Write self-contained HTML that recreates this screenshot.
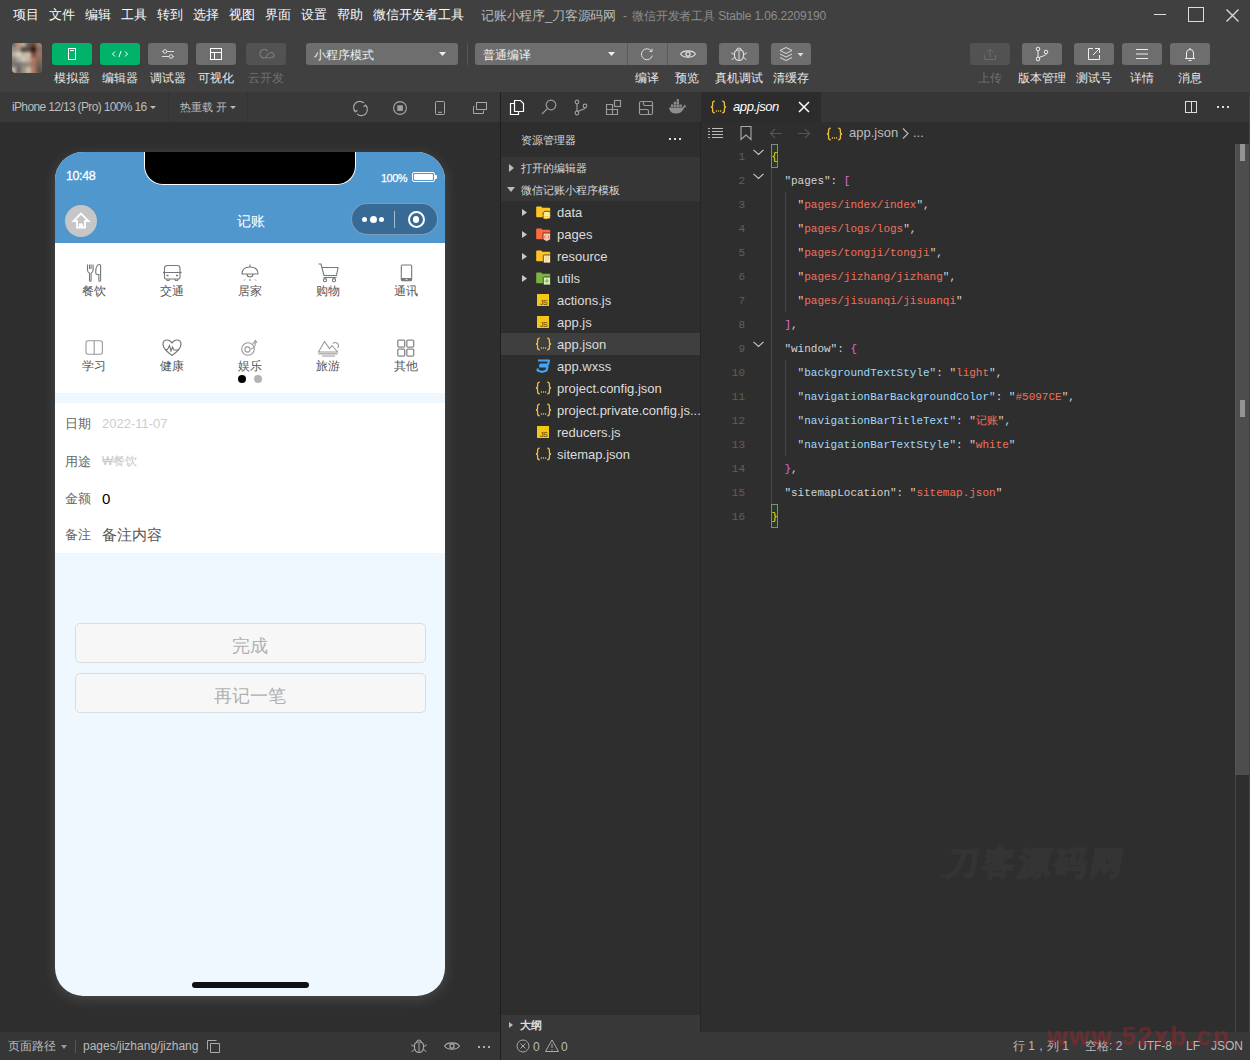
<!DOCTYPE html>
<html><head><meta charset="utf-8">
<style>
*{box-sizing:border-box;margin:0;padding:0}
html,body{width:1250px;height:1060px;overflow:hidden;background:#2e2e2e;font-family:"Liberation Sans",sans-serif;color:#ddd}
.a{position:absolute}
.t{position:absolute;white-space:nowrap;line-height:1}
svg{position:absolute;overflow:visible}
/* regions */
#top{left:0;top:0;width:1250px;height:92px;background:#404040}
#simbar{left:0;top:92px;width:500px;height:30px;background:#393939}
#sim{left:0;top:122px;width:500px;height:910px;background:#2e2e2e}
#simbot{left:0;top:1032px;width:500px;height:28px;background:#363636}
#vdiv{left:500px;top:92px;width:1px;height:968px;background:#1f1f1f}
#act{left:501px;top:92px;width:199px;height:30px;background:#353535}
#tree{left:501px;top:122px;width:199px;height:910px;background:#2e2e2e}
#tabbar{left:700px;top:92px;width:550px;height:30px;background:#363636}
#tab{left:701px;top:92px;width:120px;height:30px;background:#2c2c2c}
#ed{left:700px;top:122px;width:550px;height:910px;background:#2e2e2e}
#status{left:501px;top:1032px;width:749px;height:28px;background:#383838}
.menu{font-size:13px;color:#fafafa;top:8px;font-weight:500}
.btn{position:absolute;top:43px;height:22px;width:40px;border-radius:3px;background:#6e6e6e}
.btn.g{background:#00b26a}
.btn.d{background:#4a4a4a}
.lbl{font-size:12px;color:#e8e8e8;top:72px;font-weight:500}
.lbl.d{color:#707070}
.gl{font-size:12px;color:#555;top:285px}
.gl2{font-size:12px;color:#555;top:360px}
.fl{left:65px;font-size:13px;color:#666}
.tr{left:557px;font-size:13px;color:#dcdcdc}
.ln{left:725px;width:20px;text-align:right;font-family:'Liberation Mono',monospace;font-size:11px;line-height:24px;color:#5f5f5f}
.cd{font-family:'Liberation Mono',monospace;font-size:11px;line-height:24px;color:#d4d4d4}
</style></head><body>
<div id="top" class="a"></div>
<div id="simbar" class="a"></div>
<div id="sim" class="a"></div>
<div id="simbot" class="a"></div>
<div id="act" class="a"></div>
<div id="tree" class="a"></div>
<div id="tabbar" class="a"></div>
<div id="tab" class="a"></div>
<div id="ed" class="a"></div>
<div id="status" class="a"></div>
<div id="vdiv" class="a"></div>
<div class="a" style="left:700px;top:122px;width:1px;height:910px;background:#262626"></div>

<!-- menu -->
<div class="t menu" style="left:13px">项目</div>
<div class="t menu" style="left:49px">文件</div>
<div class="t menu" style="left:85px">编辑</div>
<div class="t menu" style="left:121px">工具</div>
<div class="t menu" style="left:157px">转到</div>
<div class="t menu" style="left:193px">选择</div>
<div class="t menu" style="left:229px">视图</div>
<div class="t menu" style="left:265px">界面</div>
<div class="t menu" style="left:301px">设置</div>
<div class="t menu" style="left:337px">帮助</div>
<div class="t menu" style="left:373px">微信开发者工具</div>
<div class="t menu" style="left:481px;top:9px;font-size:13px;letter-spacing:-0.2px;font-weight:400;color:#b8b8b8">记账小程序_刀客源码网</div><div class="t" style="left:623px;top:10px;font-size:12px;color:#8c8c8c">-</div><div class="t" style="left:632px;top:10px;font-size:12px;letter-spacing:-0.15px;color:#8c8c8c">微信开发者工具 Stable 1.06.2209190</div>

<!-- window controls -->
<div class="a" style="left:1154px;top:14px;width:12px;height:1px;background:#ddd"></div>
<div class="a" style="left:1188px;top:7px;width:16px;height:15px;border:1.5px solid #ddd"></div>
<svg style="left:1226px;top:9px" width="13" height="13"><path d="M0.5 0.5L12.5 12.5M12.5 0.5L0.5 12.5" stroke="#ddd" stroke-width="1.3"/></svg>


<!-- toolbar -->
<div class="a" style="left:12px;top:43px;width:30px;height:30px;border-radius:4px;overflow:hidden;background:#8a8078"><div class="a" style="left:0;top:0;width:30px;height:30px;filter:blur(1.6px)"><div class="a" style="left:-1px;top:-1px;width:7px;height:7px;background:#7a6a60"></div><div class="a" style="left:4px;top:-1px;width:7px;height:7px;background:#c0906e"></div><div class="a" style="left:9px;top:-1px;width:7px;height:7px;background:#b8b0a8"></div><div class="a" style="left:14px;top:-1px;width:7px;height:7px;background:#6a5a50"></div><div class="a" style="left:19px;top:-1px;width:7px;height:7px;background:#6a4030"></div><div class="a" style="left:24px;top:-1px;width:7px;height:7px;background:#a08070"></div><div class="a" style="left:-1px;top:4px;width:7px;height:7px;background:#9a9088"></div><div class="a" style="left:4px;top:4px;width:7px;height:7px;background:#a09a90"></div><div class="a" style="left:9px;top:4px;width:7px;height:7px;background:#504840"></div><div class="a" style="left:14px;top:4px;width:7px;height:7px;background:#5a4a40"></div><div class="a" style="left:19px;top:4px;width:7px;height:7px;background:#2a1810"></div><div class="a" style="left:24px;top:4px;width:7px;height:7px;background:#8a7060"></div><div class="a" style="left:-1px;top:9px;width:7px;height:7px;background:#b8b0a0"></div><div class="a" style="left:4px;top:9px;width:7px;height:7px;background:#d8d0c0"></div><div class="a" style="left:9px;top:9px;width:7px;height:7px;background:#c0b8a8"></div><div class="a" style="left:14px;top:9px;width:7px;height:7px;background:#d0c0b0"></div><div class="a" style="left:19px;top:9px;width:7px;height:7px;background:#7a4a40"></div><div class="a" style="left:24px;top:9px;width:7px;height:7px;background:#a07060"></div><div class="a" style="left:-1px;top:14px;width:7px;height:7px;background:#8a8078"></div><div class="a" style="left:4px;top:14px;width:7px;height:7px;background:#b0a8a0"></div><div class="a" style="left:9px;top:14px;width:7px;height:7px;background:#d0c8b8"></div><div class="a" style="left:14px;top:14px;width:7px;height:7px;background:#c8b0a0"></div><div class="a" style="left:19px;top:14px;width:7px;height:7px;background:#b07868"></div><div class="a" style="left:24px;top:14px;width:7px;height:7px;background:#8a6858"></div><div class="a" style="left:-1px;top:19px;width:7px;height:7px;background:#787070"></div><div class="a" style="left:4px;top:19px;width:7px;height:7px;background:#7a7272"></div><div class="a" style="left:9px;top:19px;width:7px;height:7px;background:#888080"></div><div class="a" style="left:14px;top:19px;width:7px;height:7px;background:#9a8880"></div><div class="a" style="left:19px;top:19px;width:7px;height:7px;background:#a87060"></div><div class="a" style="left:24px;top:19px;width:7px;height:7px;background:#706058"></div><div class="a" style="left:-1px;top:24px;width:7px;height:7px;background:#c0b8a0"></div><div class="a" style="left:4px;top:24px;width:7px;height:7px;background:#6a6060"></div><div class="a" style="left:9px;top:24px;width:7px;height:7px;background:#9a9080"></div><div class="a" style="left:14px;top:24px;width:7px;height:7px;background:#c8c0a8"></div><div class="a" style="left:19px;top:24px;width:7px;height:7px;background:#b07a68"></div><div class="a" style="left:24px;top:24px;width:7px;height:7px;background:#605048"></div></div></div>
<div class="btn g" style="left:52px"></div>
<svg style="left:52px;top:43px" width="40" height="22"><rect x="16.5" y="5.5" width="7" height="11" fill="none" stroke="#fff" stroke-width="1"/><path d="M18 7.5H22" stroke="#fff"/></svg>
<div class="btn g" style="left:100px"></div>
<svg style="left:100px;top:43px" width="40" height="22"><path d="M15 8.5L12.5 11L15 13.5M25 8.5L27.5 11L25 13.5M21 8L19 14" fill="none" stroke="#fff" stroke-width="1"/></svg>
<div class="btn" style="left:148px"></div>
<svg style="left:148px;top:43px" width="40" height="22"><path d="M14 8.5H26M14 13.5H26" stroke="#ddd" stroke-width="1"/><circle cx="17" cy="8.5" r="1.8" fill="#6e6e6e" stroke="#ddd"/><circle cx="23" cy="13.5" r="1.8" fill="#6e6e6e" stroke="#ddd"/></svg>
<div class="btn" style="left:196px"></div>
<svg style="left:196px;top:43px" width="40" height="22"><rect x="14.5" y="5.5" width="11" height="11" fill="none" stroke="#fff"/><path d="M14.5 9.5H25.5M18.5 9.5V16.5" stroke="#fff"/></svg>
<div class="btn d" style="left:246px;background:#525252"></div>
<svg style="left:246px;top:43px" width="40" height="22"><path d="M21.8 8.2A4.3 4.3 0 1 0 19.5 14.8" fill="none" stroke="#7c7c7c" stroke-width="1.1"/><path d="M19.5 14.8L25.8 14.8A2.6 2.6 0 1 0 24.5 9.8Q22 10 19.5 14.8Z" fill="none" stroke="#7c7c7c" stroke-width="1.1"/></svg>
<div class="t lbl" style="left:54px">模拟器</div>
<div class="t lbl" style="left:102px">编辑器</div>
<div class="t lbl" style="left:150px">调试器</div>
<div class="t lbl" style="left:198px">可视化</div>
<div class="t lbl d" style="left:248px">云开发</div>

<div class="a" style="left:306px;top:43px;width:152px;height:22px;border-radius:3px;background:#6e6e6e"></div>
<div class="t" style="left:314px;top:49px;font-size:12px;color:#eee">小程序模式</div>
<svg style="left:439px;top:52px" width="7" height="4"><path d="M0 0H7L3.5 4Z" fill="#eee"/></svg>
<div class="a" style="left:467px;top:43px;width:1px;height:22px;background:#555"></div>
<div class="a" style="left:475px;top:43px;width:232px;height:22px;border-radius:3px;background:#6e6e6e"></div>
<div class="a" style="left:627px;top:43px;width:1px;height:22px;background:#5a5a5a"></div>
<div class="a" style="left:667px;top:43px;width:1px;height:22px;background:#5a5a5a"></div>
<div class="t" style="left:483px;top:49px;font-size:12px;color:#eee">普通编译</div>
<svg style="left:608px;top:52px" width="7" height="4"><path d="M0 0H7L3.5 4Z" fill="#eee"/></svg>
<svg style="left:640px;top:47px" width="14" height="14"><path d="M11.5 4.2A5.5 5.5 0 1 0 12.3 8.5" fill="none" stroke="#ddd" stroke-width="1"/><path d="M9.5 4.5L12 4.5L12 1.8" fill="none" stroke="#ddd" stroke-width="1"/></svg>
<svg style="left:680px;top:49px" width="17" height="11"><path d="M0.6 5C3 0.8 13 0.8 15.4 5C13 9.2 3 9.2 0.6 5Z" fill="none" stroke="#e0e0e0" stroke-width="1.1"/><circle cx="8" cy="5" r="2.1" fill="none" stroke="#e0e0e0" stroke-width="1.2"/></svg>
<div class="btn" style="left:719px"></div>
<svg style="left:730px;top:46px" width="18" height="16"><path d="M4.5 9.5A4.5 5 0 0 0 13.5 9.5V7.5Q13.5 4 9 4Q4.5 4 4.5 7.5Z" fill="none" stroke="#e0e0e0" stroke-width="1.1"/><path d="M6.5 4.5A2.5 2.5 0 0 1 11.5 4.5" fill="none" stroke="#e0e0e0"/><path d="M9 5V14.3M4.5 8H2.5L1.5 6.5M13.5 8H15.5L16.5 6.5M4.7 11.5L2.8 12.5L1.8 14M13.3 11.5L15.2 12.5L16.2 14" fill="none" stroke="#e0e0e0" stroke-width="1"/></svg>
<div class="btn" style="left:771px"></div>
<svg style="left:779px;top:46px" width="28" height="16"><path d="M1 4.5L7 1.5L13 4.5L7 7.5Z" fill="none" stroke="#ddd"/><path d="M1 8L7 11L13 8M1 11.5L7 14.5L13 11.5" fill="none" stroke="#ddd"/><path d="M18.5 7H24.5L21.5 10.5Z" fill="#ddd"/></svg>
<div class="t lbl" style="left:635px">编译</div>
<div class="t lbl" style="left:675px">预览</div>
<div class="t lbl" style="left:715px">真机调试</div>
<div class="t lbl" style="left:773px">清缓存</div>

<div class="btn d" style="left:970px;background:#525252"></div>
<svg style="left:983px;top:47px" width="14" height="14"><path d="M7 10V2M4 5L7 2L10 5M1.5 8V12.5H12.5V8" fill="none" stroke="#6a6a6a"/></svg>
<div class="btn" style="left:1022px"></div>
<svg style="left:1034px;top:46px" width="16" height="16"><circle cx="4" cy="3" r="1.8" fill="none" stroke="#eee"/><circle cx="4" cy="13" r="1.8" fill="none" stroke="#eee"/><circle cx="12" cy="6" r="1.8" fill="none" stroke="#eee"/><path d="M4 4.8V11.2M12 7.8C12 10 7 10 5 11.8" fill="none" stroke="#eee"/></svg>
<div class="btn" style="left:1074px"></div>
<svg style="left:1087px;top:47px" width="14" height="14"><path d="M6 1.5H1.5V12.5H12.5V8M8 1.5H12.5V6M12.5 1.5L6 8" fill="none" stroke="#eee"/></svg>
<div class="btn" style="left:1122px"></div>
<svg style="left:1135px;top:48px" width="14" height="12"><path d="M1 1.5H13M1 6H13M1 10.5H13" stroke="#eee"/></svg>
<div class="btn" style="left:1170px"></div>
<svg style="left:1183px;top:46px" width="14" height="16"><path d="M2 12.5H12M3.5 12.5V7A3.5 3.5 0 0 1 10.5 7V12.5M7 2V3.5M5.5 14.5H8.5" fill="none" stroke="#eee"/></svg>
<div class="t lbl d" style="left:978px">上传</div>
<div class="t lbl" style="left:1018px">版本管理</div>
<div class="t lbl" style="left:1076px">测试号</div>
<div class="t lbl" style="left:1130px">详情</div>
<div class="t lbl" style="left:1178px">消息</div>


<!-- simulator toolbar -->
<div class="t" style="left:12px;top:101px;font-size:12px;letter-spacing:-0.65px;color:#bdbdbd">iPhone 12/13 (Pro) 100% 16</div>
<svg style="left:150px;top:106px" width="6" height="3"><path d="M0 0H6L3 3Z" fill="#bbb"/></svg>
<div class="a" style="left:168px;top:92px;width:1px;height:30px;background:#333"></div>
<div class="t" style="left:180px;top:102px;font-size:11px;color:#bdbdbd">热重载 开</div>
<svg style="left:230px;top:106px" width="6" height="3"><path d="M0 0H6L3 3Z" fill="#bbb"/></svg>
<div class="a" style="left:247px;top:92px;width:1px;height:30px;background:#333"></div>
<svg style="left:353px;top:101px" width="15" height="15"><path d="M2.3 10.5A6 6 0 0 1 11 2.2" fill="none" stroke="#a8a8a8" stroke-width="1.1"/><path d="M12.7 4.5A6 6 0 0 1 4 12.8" fill="none" stroke="#a8a8a8" stroke-width="1.1"/><path d="M0.8 8.5L2.3 11L4.5 9.3M14.2 6.5L12.7 4L10.5 5.7" fill="none" stroke="#a8a8a8" stroke-width="1.1"/></svg>
<svg style="left:393px;top:101px" width="14" height="14"><circle cx="7" cy="7" r="6.4" fill="none" stroke="#a8a8a8" stroke-width="1.1"/><rect x="4.3" y="4.3" width="5.6" height="5.6" fill="#a0a0a0"/></svg>
<svg style="left:435px;top:101px" width="10" height="14"><rect x="0.5" y="0.5" width="9" height="13" rx="1" fill="none" stroke="#a8a8a8"/><path d="M3 11.3H7" stroke="#a8a8a8"/></svg>
<svg style="left:473px;top:102px" width="15" height="13"><rect x="3.5" y="0.5" width="10" height="7" fill="none" stroke="#a8a8a8"/><path d="M1.5 4.5H0.5V11.5H10.5V8.5" fill="none" stroke="#a8a8a8"/></svg>

<!-- phone -->
<div class="a" style="left:55px;top:152px;width:390px;height:844px;border-radius:28px;box-shadow:0 3px 14px rgba(255,255,255,.14)"></div>
<div class="a" id="phone" style="left:55px;top:152px;width:390px;height:844px;border-radius:28px;overflow:hidden;background:#f0f8ff">
  <div class="a" style="left:0;top:0;width:390px;height:91px;background:#5097ce"></div>
  <div class="a" style="left:89px;top:-2px;width:212px;height:35px;background:#000;border:1px solid #fff;border-top:none;border-radius:0 0 19px 19px"></div>
  <div class="a" style="left:0;top:91px;width:390px;height:150px;background:#fff"></div>
  <div class="a" style="left:0;top:251px;width:390px;height:150px;background:#fff"></div>
</div>
<div class="t" style="left:66px;top:170px;font-size:12.5px;color:#fff;letter-spacing:-0.4px;-webkit-text-stroke:0.3px #fff">10:48</div>
<div class="t" style="left:381px;top:173px;font-size:11px;color:#fff;letter-spacing:-0.5px;-webkit-text-stroke:0.25px #fff">100%</div>
<div class="a" style="left:412px;top:172px;width:23px;height:10px;border:1px solid #fff;border-radius:2px"></div>
<div class="a" style="left:414px;top:174px;width:19px;height:6px;background:#fff;border-radius:1px"></div>
<div class="a" style="left:435px;top:175px;width:2px;height:4px;background:#fff;border-radius:0 1px 1px 0"></div>
<div class="a" style="left:65px;top:205px;width:32px;height:32px;border-radius:50%;background:#c6c6c6"></div>
<svg style="left:72px;top:212px" width="18" height="18"><path d="M9 1.5L1.5 9H5V15.5H8V12.5H10V15.5H13V9H16.5Z" fill="none" stroke="#fff" stroke-width="1.8" stroke-linejoin="miter"/></svg>
<div class="t" style="left:237px;top:214px;font-size:14px;color:#fff">记账</div>
<div class="a" style="left:351px;top:203px;width:87px;height:32px;border-radius:16px;background:#376b96;border:1px solid rgba(255,255,255,.35)"></div>
<div class="a" style="left:362px;top:217px;width:5px;height:5px;border-radius:50%;background:#fff"></div>
<div class="a" style="left:369.5px;top:215.5px;width:7.5px;height:7.5px;border-radius:50%;background:#fff"></div>
<div class="a" style="left:379px;top:217px;width:5px;height:5px;border-radius:50%;background:#fff"></div>
<div class="a" style="left:394px;top:211px;width:1px;height:17px;background:rgba(255,255,255,.55)"></div>
<div class="a" style="left:407.5px;top:211px;width:17px;height:17px;border-radius:50%;border:2px solid #fff"></div>
<div class="a" style="left:412.8px;top:216.3px;width:6.5px;height:6.5px;border-radius:50%;background:#fff"></div>
<div class="a" style="left:192px;top:982px;width:117px;height:6px;border-radius:3px;background:#111"></div>


<!-- grid -->
<svg style="left:0;top:0" width="500" height="400" fill="none" stroke="#777" stroke-width="1.1">
<path d="M87.5 264.5V270Q87.5 272.5 89.5 273.2V280.2Q89.5 281.3 90.3 281.3Q91.1 281.3 91.1 280.2V273.2Q93.1 272.5 93.1 270V264.5M89.5 264.5V269M91.1 264.5V269"/>
<path d="M95.7 272.5Q95.7 264.5 99.5 264.5Q100.6 264.5 100.6 265.7V280.2Q100.6 281.3 99.7 281.3Q98.8 281.3 98.8 280.2V274.5H97.2Q95.7 274.5 95.7 272.5Z"/>
<path d="M164.5 272.5V268Q164.5 265.5 167.5 265.5H177Q180 265.5 180 268V272.5M164.5 272.5H180V277.5Q180 279 178.5 279H166Q164.5 279 164.5 277.5Z"/>
<path d="M163 272.5H164.5M180 272.5H181.5M166.5 275.5H168.5M176 275.5H178" stroke-width="1.3"/>
<path d="M166.5 279Q166.5 280.8 168 280.8Q169.5 280.8 169.5 279M175 279Q175 280.8 176.5 280.8Q178 280.8 178 279"/>
<path d="M242 274Q242 267 250 267Q258 267 258 274Z"/><path d="M250 267V264.5"/><path d="M247 274Q247 277 250 277Q253 277 253 274"/>
<path d="M245 279.5L244 280.5M255 279.5L256 280.5M250 279V281" stroke-width="1"/>
<path d="M318.5 264H321L324 275.5H336.5L338 267.5H322"/><path d="M323.5 277.5H336.5"/>
<circle cx="325" cy="280.2" r="1.6"/><circle cx="334" cy="280.2" r="1.6"/>
<rect x="401.3" y="265" width="10.4" height="15.8" rx="1.2"/><rect x="401.3" y="278" width="10.4" height="2.8" fill="#777" stroke="none"/><path d="M405.5 279.4H407.5" stroke="#fff" stroke-width="0.8"/>
</svg>
<div class="t gl" style="left:82px">餐饮</div>
<div class="t gl" style="left:160px">交通</div>
<div class="t gl" style="left:238px">居家</div>
<div class="t gl" style="left:316px">购物</div>
<div class="t gl" style="left:394px">通讯</div>
<svg style="left:0;top:0" width="500" height="400" fill="none" stroke="#888" stroke-width="1.1">
<rect x="86" y="340.8" width="16.4" height="13.4" rx="2.2" stroke="#999"/><path d="M94.2 340.8V354.2" stroke="#999"/>
<path d="M172 355.5Q163 349 163 344.3Q163 340 167 340Q170 340 172 343Q174 340 177 340Q181 340 181 344.3Q181 349 172 355.5Z" stroke-width="1.2" stroke="#777"/>
<path d="M165 349.5H167.5L169.5 345.5L171 351L172.5 347L174 350H179" stroke="#777"/>
<circle cx="248" cy="349" r="6.3" stroke="#999"/><circle cx="247.5" cy="349.5" r="2.6" stroke="#999"/><path d="M251 349Q256.5 347 255 342M252.5 344.5L255.5 340.5L257 343" stroke="#999"/>
<path d="M318.5 352L324.5 341.5L329.5 348.5L332 345.5L337.5 352Z" stroke="#999"/><path d="M333 343.5A3 3 0 1 1 337.5 348" stroke="#999"/>
<path d="M318.5 353.8H337.5" stroke="#aaa" stroke-width="1.4"/><path d="M322 356H335" stroke="#bbb" stroke-width="1.6"/>
<rect x="397.8" y="340.2" width="6.9" height="6.9" rx="1" stroke="#888" stroke-width="1.3"/><rect x="406.8" y="340.2" width="6.9" height="6.9" rx="1" stroke="#888" stroke-width="1.3"/>
<rect x="397.8" y="349.2" width="6.9" height="6.9" rx="1" stroke="#888" stroke-width="1.3"/><rect x="406.8" y="349.2" width="6.9" height="6.9" rx="1" stroke="#888" stroke-width="1.3"/>
</svg>
<div class="t gl2" style="left:82px">学习</div>
<div class="t gl2" style="left:160px">健康</div>
<div class="t gl2" style="left:238px">娱乐</div>
<div class="t gl2" style="left:316px">旅游</div>
<div class="t gl2" style="left:394px">其他</div>
<div class="a" style="left:238px;top:375px;width:8px;height:8px;border-radius:50%;background:#000"></div>
<div class="a" style="left:254px;top:375px;width:8px;height:8px;border-radius:50%;background:#b3b3b3"></div>

<!-- form -->
<div class="t fl" style="top:417px">日期</div>
<div class="t" style="left:102px;top:417px;font-size:13px;color:#cdcdcd">2022-11-07</div>
<div class="t fl" style="top:455px">用途</div>
<div class="t" style="left:102px;top:455px;font-size:12px;color:#c9c9c9">₩餐饮</div>
<div class="t fl" style="top:492px">金额</div>
<div class="t" style="left:102px;top:491px;font-size:15px;color:#000">0</div>
<div class="t fl" style="top:528px">备注</div>
<div class="t" style="left:102px;top:527px;font-size:15px;color:#555">备注内容</div>

<div class="a" style="left:75px;top:623px;width:351px;height:40px;border-radius:5px;background:#f7f7f7;border:1px solid #dcdcdc"></div>
<div class="t" style="left:232px;top:637px;font-size:18px;color:#b0b0b0">完成</div>
<div class="a" style="left:75px;top:673px;width:351px;height:40px;border-radius:5px;background:#f7f7f7;border:1px solid #dcdcdc"></div>
<div class="t" style="left:214px;top:687px;font-size:18px;color:#b0b0b0">再记一笔</div>


<!-- activity bar -->
<svg style="left:509px;top:99px" width="16" height="17" fill="none" stroke="#fff" stroke-width="1.2"><path d="M5.5 4.5H1.5V15.5H9.5V12.5"/><path d="M5.5 1.5H11.5L14.5 4.5V12.5H5.5Z"/></svg>
<svg style="left:541px;top:99px" width="16" height="17" fill="none" stroke="#9a9a9a" stroke-width="1.2"><circle cx="10" cy="6" r="4.8"/><path d="M6.6 9.4L1 15"/></svg>
<svg style="left:573px;top:99px" width="16" height="17" fill="none" stroke="#9a9a9a" stroke-width="1.2"><circle cx="4" cy="3" r="1.8"/><circle cx="4" cy="14" r="1.8"/><circle cx="12" cy="7" r="1.8"/><path d="M4 4.8V12.2M12 8.8C12 11 6 10.5 5 12.5"/></svg>
<svg style="left:605px;top:99px" width="17" height="17" fill="none" stroke="#9a9a9a" stroke-width="1.2"><path d="M1.5 5.5H7.5V15.5H1.5ZM1.5 10.5H12.5V15.5H7.5"/><rect x="9.5" y="1.5" width="6" height="6"/></svg>
<svg style="left:638px;top:100px" width="16" height="16" fill="none" stroke="#9a9a9a" stroke-width="1.2"><rect x="1.5" y="1.5" width="13" height="13" rx="1.5"/><path d="M5.5 1.5V4Q5.5 5.5 7 5.5H14.5M1.5 9.5H9Q10.5 9.5 10.5 11V14.5"/></svg>
<svg style="left:668px;top:100px" width="19" height="15"><path d="M1 7.5H14.5Q16 6 16.5 4.5Q17.5 6 18.5 6.5Q17 7 16 8Q14 13.5 8 13.5Q1.5 13.5 1 7.5Z" fill="#8e8e8e"/><rect x="3" y="4.5" width="2.4" height="2.4" fill="#8e8e8e"/><rect x="5.8" y="4.5" width="2.4" height="2.4" fill="#8e8e8e"/><rect x="8.6" y="4.5" width="2.4" height="2.4" fill="#8e8e8e"/><rect x="11.4" y="4.5" width="2.4" height="2.4" fill="#8e8e8e"/><rect x="5.8" y="1.8" width="2.4" height="2.4" fill="#8e8e8e"/><rect x="8.6" y="1.8" width="2.4" height="2.4" fill="#8e8e8e"/><rect x="8.6" y="-0.8" width="2.4" height="2.4" fill="#8e8e8e"/></svg>
<!-- explorer -->
<div class="t" style="left:521px;top:135px;font-size:11px;font-weight:500;color:#d8d8d8">资源管理器</div>
<div class="a" style="left:669px;top:138px;width:2px;height:2px;background:#ddd"></div>
<div class="a" style="left:674px;top:138px;width:2px;height:2px;background:#ddd"></div>
<div class="a" style="left:679px;top:138px;width:2px;height:2px;background:#ddd"></div>
<div class="a" style="left:501px;top:157px;width:199px;height:44px;background:#363636"></div>
<svg style="left:509px;top:164px" width="5" height="8"><path d="M0 0L5 4L0 8Z" fill="#bbb"/></svg>
<div class="t" style="left:521px;top:163px;font-size:11px;font-weight:500;color:#d8d8d8">打开的编辑器</div>
<svg style="left:507px;top:187px" width="8" height="5"><path d="M0 0H8L4 5Z" fill="#bbb"/></svg>
<div class="t" style="left:521px;top:185px;font-size:11px;font-weight:500;color:#d8d8d8">微信记账小程序模板</div>
<svg style="left:522px;top:209px" width="5" height="7"><path d="M0 0L5 3.5L0 7Z" fill="#c8c8c8"/></svg><svg style="left:536px;top:206px" width="16" height="14"><path d="M0.2 1.2Q0.2 0.4 1 0.4H5.2L6.4 1.8H13.4Q14.2 1.8 14.2 2.6V10.4Q14.2 11.2 13.4 11.2H1Q0.2 11.2 0.2 10.4Z" fill="#ffc522"/><ellipse cx="10.8" cy="6.8" rx="3.6" ry="1.6" fill="#ffe7a0" stroke="#2e2e2e" stroke-width="0.8"/><path d="M7.2 6.8V11.5Q7.2 13.1 10.8 13.1Q14.4 13.1 14.4 11.5V6.8" fill="#ffe7a0" stroke="#2e2e2e" stroke-width="0.8"/><path d="M7.2 9.2Q7.2 10.6 10.8 10.6Q14.4 10.6 14.4 9.2M7.2 11.4Q7.2 12.8 10.8 12.8" fill="none" stroke="#ffc522" stroke-width="0.7"/></svg><div class="t tr" style="top:206px">data</div><svg style="left:522px;top:231px" width="5" height="7"><path d="M0 0L5 3.5L0 7Z" fill="#c8c8c8"/></svg><svg style="left:536px;top:228px" width="16" height="14"><path d="M0.2 1.2Q0.2 0.4 1 0.4H5.2L6.4 1.8H13.4Q14.2 1.8 14.2 2.6V10.4Q14.2 11.2 13.4 11.2H1Q0.2 11.2 0.2 10.4Z" fill="#ff6a3d"/><path d="M7 5H14.5V11.5L10.75 13.5L7 11.5Z" fill="#ffc9b8" stroke="#2e2e2e" stroke-width="0.8"/><path d="M9.5 7.5L8.5 9L9.5 10.5M12 7.5L13 9L12 10.5" fill="none" stroke="#f04a2a" stroke-width="0.8"/></svg><div class="t tr" style="top:228px">pages</div><svg style="left:522px;top:253px" width="5" height="7"><path d="M0 0L5 3.5L0 7Z" fill="#c8c8c8"/></svg><svg style="left:536px;top:250px" width="16" height="14"><path d="M0.2 1.2Q0.2 0.4 1 0.4H5.2L6.4 1.8H13.4Q14.2 1.8 14.2 2.6V10.4Q14.2 11.2 13.4 11.2H1Q0.2 11.2 0.2 10.4Z" fill="#ffc125"/><rect x="7.3" y="5" width="7.2" height="8" rx="0.8" fill="#fff0c0" stroke="#2e2e2e" stroke-width="0.8"/><path d="M8.8 7.3H13M8.8 9.2H13M8.8 11H11.5" stroke="#ffc125" stroke-width="0.8"/></svg><div class="t tr" style="top:250px">resource</div><svg style="left:522px;top:275px" width="5" height="7"><path d="M0 0L5 3.5L0 7Z" fill="#c8c8c8"/></svg><svg style="left:536px;top:272px" width="16" height="14"><path d="M0.2 1.2Q0.2 0.4 1 0.4H5.2L6.4 1.8H13.4Q14.2 1.8 14.2 2.6V10.4Q14.2 11.2 13.4 11.2H1Q0.2 11.2 0.2 10.4Z" fill="#7cb342"/><rect x="7.3" y="5" width="7.2" height="8" rx="0.8" fill="#d8f0c0" stroke="#2e2e2e" stroke-width="0.8"/><path d="M10.9 6.8V11.2M8.7 9H13.1" stroke="#7cb342" stroke-width="1.1"/></svg><div class="t tr" style="top:272px">utils</div><div class="a" style="left:537px;top:294px;width:12px;height:12px;background:#f5c518"></div><div class="t" style="left:540px;top:299px;font-size:7px;color:#4a3b00;letter-spacing:-0.6px">JS</div><div class="t tr" style="top:294px">actions.js</div><div class="a" style="left:537px;top:316px;width:12px;height:12px;background:#f5c518"></div><div class="t" style="left:540px;top:321px;font-size:7px;color:#4a3b00;letter-spacing:-0.6px">JS</div><div class="t tr" style="top:316px">app.js</div><div class="a" style="left:501px;top:333px;width:199px;height:22px;background:#3f3f3f"></div><svg style="left:535px;top:337px" width="17" height="14"><path d="M4.8 1.2Q2.6 1.2 2.6 3.2V5.3Q2.6 7 0.9 7Q2.6 7 2.6 8.7V10.8Q2.6 12.8 4.8 12.8M12.2 1.2Q14.4 1.2 14.4 3.2V5.3Q14.4 7 16.1 7Q14.4 7 14.4 8.7V10.8Q14.4 12.8 12.2 12.8" fill="none" stroke="#f1bf3a" stroke-width="1.3"/><rect x="5.8" y="10.3" width="1.2" height="1.4" fill="#f1bf3a"/><rect x="7.9" y="10.3" width="1.2" height="1.4" fill="#f1bf3a"/><rect x="10" y="10.3" width="1.2" height="1.4" fill="#f1bf3a"/></svg><div class="t tr" style="top:338px">app.json</div><svg style="left:536px;top:359px" width="14" height="14"><path d="M2 1.5H13L12 5.5H4.5L4 7.5H11.5L10.5 11.5L6 13L1.5 11.5L2 9.5" fill="none" stroke="#42a5f5" stroke-width="2.2" stroke-linejoin="round"/></svg><div class="t tr" style="top:360px">app.wxss</div><svg style="left:535px;top:381px" width="17" height="14"><path d="M4.8 1.2Q2.6 1.2 2.6 3.2V5.3Q2.6 7 0.9 7Q2.6 7 2.6 8.7V10.8Q2.6 12.8 4.8 12.8M12.2 1.2Q14.4 1.2 14.4 3.2V5.3Q14.4 7 16.1 7Q14.4 7 14.4 8.7V10.8Q14.4 12.8 12.2 12.8" fill="none" stroke="#f1bf3a" stroke-width="1.3"/><rect x="5.8" y="10.3" width="1.2" height="1.4" fill="#f1bf3a"/><rect x="7.9" y="10.3" width="1.2" height="1.4" fill="#f1bf3a"/><rect x="10" y="10.3" width="1.2" height="1.4" fill="#f1bf3a"/></svg><div class="t tr" style="top:382px">project.config.json</div><svg style="left:535px;top:403px" width="17" height="14"><path d="M4.8 1.2Q2.6 1.2 2.6 3.2V5.3Q2.6 7 0.9 7Q2.6 7 2.6 8.7V10.8Q2.6 12.8 4.8 12.8M12.2 1.2Q14.4 1.2 14.4 3.2V5.3Q14.4 7 16.1 7Q14.4 7 14.4 8.7V10.8Q14.4 12.8 12.2 12.8" fill="none" stroke="#f1bf3a" stroke-width="1.3"/><rect x="5.8" y="10.3" width="1.2" height="1.4" fill="#f1bf3a"/><rect x="7.9" y="10.3" width="1.2" height="1.4" fill="#f1bf3a"/><rect x="10" y="10.3" width="1.2" height="1.4" fill="#f1bf3a"/></svg><div class="t tr" style="top:404px">project.private.config.js...</div><div class="a" style="left:537px;top:426px;width:12px;height:12px;background:#f5c518"></div><div class="t" style="left:540px;top:431px;font-size:7px;color:#4a3b00;letter-spacing:-0.6px">JS</div><div class="t tr" style="top:426px">reducers.js</div><svg style="left:535px;top:447px" width="17" height="14"><path d="M4.8 1.2Q2.6 1.2 2.6 3.2V5.3Q2.6 7 0.9 7Q2.6 7 2.6 8.7V10.8Q2.6 12.8 4.8 12.8M12.2 1.2Q14.4 1.2 14.4 3.2V5.3Q14.4 7 16.1 7Q14.4 7 14.4 8.7V10.8Q14.4 12.8 12.2 12.8" fill="none" stroke="#f1bf3a" stroke-width="1.3"/><rect x="5.8" y="10.3" width="1.2" height="1.4" fill="#f1bf3a"/><rect x="7.9" y="10.3" width="1.2" height="1.4" fill="#f1bf3a"/><rect x="10" y="10.3" width="1.2" height="1.4" fill="#f1bf3a"/></svg><div class="t tr" style="top:448px">sitemap.json</div>
<div class="a" style="left:501px;top:1015px;width:199px;height:17px;background:#383838"></div>
<svg style="left:509px;top:1022px" width="4" height="6"><path d="M0 0L4 3L0 6Z" fill="#bbb"/></svg>
<div class="t" style="left:520px;top:1020px;font-size:11px;font-weight:bold;color:#ddd">大纲</div>


<!-- tab -->
<svg style="left:710px;top:100px" width="17" height="14"><path d="M4.8 1.2Q2.6 1.2 2.6 3.2V5.3Q2.6 7 0.9 7Q2.6 7 2.6 8.7V10.8Q2.6 12.8 4.8 12.8M12.2 1.2Q14.4 1.2 14.4 3.2V5.3Q14.4 7 16.1 7Q14.4 7 14.4 8.7V10.8Q14.4 12.8 12.2 12.8" fill="none" stroke="#f1bf3a" stroke-width="1.3"/><rect x="5.8" y="10.3" width="1.2" height="1.4" fill="#f1bf3a"/><rect x="7.9" y="10.3" width="1.2" height="1.4" fill="#f1bf3a"/><rect x="10" y="10.3" width="1.2" height="1.4" fill="#f1bf3a"/></svg>
<div class="t" style="left:733px;top:100px;font-size:13px;font-style:italic;letter-spacing:-0.4px;color:#fff">app.json</div>
<svg style="left:798px;top:101px" width="12" height="12"><path d="M1 1L11 11M11 1L1 11" stroke="#fff" stroke-width="1.5"/></svg>
<svg style="left:1185px;top:101px" width="12" height="12"><rect x="0.5" y="0.5" width="11" height="11" fill="none" stroke="#ddd"/><path d="M6.5 0.5V11.5" stroke="#ddd"/></svg>
<div class="a" style="left:1217px;top:106px;width:2px;height:2px;background:#ddd"></div>
<div class="a" style="left:1222px;top:106px;width:2px;height:2px;background:#ddd"></div>
<div class="a" style="left:1227px;top:106px;width:2px;height:2px;background:#ddd"></div>
<!-- editor toolbar -->
<svg style="left:708px;top:127px" width="16" height="12" stroke="#bbb" stroke-width="1"><path d="M0 1.5H2M4 1.5H15M0 4.5H2M4 4.5H15M0 7.5H2M4 7.5H15M0 10.5H2M4 10.5H15"/></svg>
<svg style="left:740px;top:126px" width="12" height="14"><path d="M1 0.5H11V13.5L6 9L1 13.5Z" fill="none" stroke="#aaa" stroke-width="1.1"/></svg>
<svg style="left:769px;top:128px" width="14" height="11"><path d="M13 5.5H1.5M6 1L1.5 5.5L6 10" fill="none" stroke="#555" stroke-width="1.1"/></svg>
<svg style="left:797px;top:128px" width="14" height="11"><path d="M1 5.5H12.5M8 1L12.5 5.5L8 10" fill="none" stroke="#555" stroke-width="1.1"/></svg>
<svg style="left:826px;top:127px" width="17" height="14"><path d="M4.8 1.2Q2.6 1.2 2.6 3.2V5.3Q2.6 7 0.9 7Q2.6 7 2.6 8.7V10.8Q2.6 12.8 4.8 12.8M12.2 1.2Q14.4 1.2 14.4 3.2V5.3Q14.4 7 16.1 7Q14.4 7 14.4 8.7V10.8Q14.4 12.8 12.2 12.8" fill="none" stroke="#f1bf3a" stroke-width="1.3"/><rect x="5.8" y="10.3" width="1.2" height="1.4" fill="#f1bf3a"/><rect x="7.9" y="10.3" width="1.2" height="1.4" fill="#f1bf3a"/><rect x="10" y="10.3" width="1.2" height="1.4" fill="#f1bf3a"/></svg>
<div class="t" style="left:849px;top:126px;font-size:13px;color:#bdbdbd">app.json</div>
<svg style="left:902px;top:128px" width="7" height="11"><path d="M1 0.5L6 5.5L1 10.5" fill="none" stroke="#bbb" stroke-width="1.1"/></svg>
<div class="t" style="left:913px;top:126px;font-size:13px;color:#bdbdbd">...</div>
<!-- code -->
<div class="a" style="left:771px;top:168px;width:1px;height:336px;background:#4a4a4a"></div>
<div class="a" style="left:785px;top:192px;width:1px;height:120px;background:#444"></div>
<div class="a" style="left:785px;top:360px;width:1px;height:96px;background:#444"></div>
<div class="a" style="left:771px;top:144px;width:7px;height:24px;background:#293829;border:1px solid #888"></div>
<div class="a" style="left:771px;top:504px;width:7px;height:24px;background:#293829;border:1px solid #888"></div>
<svg style="left:753px;top:149px" width="11" height="7"><path d="M0.5 0.8L5.5 5.5L10.5 0.8" fill="none" stroke="#c8c8c8" stroke-width="1.1"/></svg><svg style="left:753px;top:173px" width="11" height="7"><path d="M0.5 0.8L5.5 5.5L10.5 0.8" fill="none" stroke="#c8c8c8" stroke-width="1.1"/></svg><svg style="left:753px;top:341px" width="11" height="7"><path d="M0.5 0.8L5.5 5.5L10.5 0.8" fill="none" stroke="#c8c8c8" stroke-width="1.1"/></svg>
<div class="t ln" style="top:145px">1</div><div class="t cd" style="left:771.20px;top:145px"><span style="color:#ffd700">{</span></div><div class="t ln" style="top:169px">2</div><div class="t cd" style="left:784.40px;top:169px">"pages": <span style="color:#da70d6">[</span></div><div class="t ln" style="top:193px">3</div><div class="t cd" style="left:797.60px;top:193px"><span style="color:#d4d4d4">"</span><span style="color:#f0705c">pages/index/index</span><span style="color:#d4d4d4">"</span>,</div><div class="t ln" style="top:217px">4</div><div class="t cd" style="left:797.60px;top:217px"><span style="color:#d4d4d4">"</span><span style="color:#f0705c">pages/logs/logs</span><span style="color:#d4d4d4">"</span>,</div><div class="t ln" style="top:241px">5</div><div class="t cd" style="left:797.60px;top:241px"><span style="color:#d4d4d4">"</span><span style="color:#f0705c">pages/tongji/tongji</span><span style="color:#d4d4d4">"</span>,</div><div class="t ln" style="top:265px">6</div><div class="t cd" style="left:797.60px;top:265px"><span style="color:#d4d4d4">"</span><span style="color:#f0705c">pages/jizhang/jizhang</span><span style="color:#d4d4d4">"</span>,</div><div class="t ln" style="top:289px">7</div><div class="t cd" style="left:797.60px;top:289px"><span style="color:#d4d4d4">"</span><span style="color:#f0705c">pages/jisuanqi/jisuanqi</span><span style="color:#d4d4d4">"</span></div><div class="t ln" style="top:313px">8</div><div class="t cd" style="left:784.40px;top:313px"><span style="color:#da70d6">]</span>,</div><div class="t ln" style="top:337px">9</div><div class="t cd" style="left:784.40px;top:337px">"window": <span style="color:#da70d6">{</span></div><div class="t ln" style="top:361px">10</div><div class="t cd" style="left:797.60px;top:361px"><span style="color:#9cdcfe">"backgroundTextStyle"</span>: <span style="color:#d4d4d4">"</span><span style="color:#f0705c">light</span><span style="color:#d4d4d4">"</span>,</div><div class="t ln" style="top:385px">11</div><div class="t cd" style="left:797.60px;top:385px"><span style="color:#9cdcfe">"navigationBarBackgroundColor"</span>: <span style="color:#d4d4d4">"</span><span style="color:#f0705c">#5097CE</span><span style="color:#d4d4d4">"</span>,</div><div class="t ln" style="top:409px">12</div><div class="t cd" style="left:797.60px;top:409px"><span style="color:#9cdcfe">"navigationBarTitleText"</span>: <span style="color:#d4d4d4">"</span><span style="color:#f0705c">记账</span><span style="color:#d4d4d4">"</span>,</div><div class="t ln" style="top:433px">13</div><div class="t cd" style="left:797.60px;top:433px"><span style="color:#9cdcfe">"navigationBarTextStyle"</span>: <span style="color:#d4d4d4">"</span><span style="color:#f0705c">white</span><span style="color:#d4d4d4">"</span></div><div class="t ln" style="top:457px">14</div><div class="t cd" style="left:784.40px;top:457px"><span style="color:#da70d6">}</span>,</div><div class="t ln" style="top:481px">15</div><div class="t cd" style="left:784.40px;top:481px">"sitemapLocation": <span style="color:#d4d4d4">"</span><span style="color:#f0705c">sitemap.json</span><span style="color:#d4d4d4">"</span></div><div class="t ln" style="top:505px">16</div><div class="t cd" style="left:771.20px;top:505px"><span style="color:#ffd700">}</span></div>
<!-- scrollbar -->
<div class="a" style="left:1235px;top:144px;width:1px;height:888px;background:#454545"></div>
<div class="a" style="left:1249px;top:92px;width:1px;height:940px;background:#424242"></div>
<div class="a" style="left:1235px;top:144px;width:14px;height:631px;background:#4d4d4d;border-left:1px solid #555"></div>
<div class="a" style="left:1240px;top:144px;width:5px;height:17px;background:#959595"></div>
<div class="a" style="left:1240px;top:400px;width:5px;height:17px;background:#959595"></div>
<!-- watermark -->
<div class="t" style="left:944px;top:847px;font-size:32px;font-weight:900;transform:skewX(-10deg);transform-origin:0 100%;letter-spacing:4px;color:#343434;-webkit-text-stroke:2px #343434">刀客源码网</div>


<!-- sim bottom bar -->
<div class="t" style="left:8px;top:1040px;font-size:12px;color:#bbb">页面路径</div>
<svg style="left:61px;top:1045px" width="6" height="4"><path d="M0 0H6L3 4Z" fill="#999"/></svg>
<div class="a" style="left:75px;top:1040px;width:1px;height:13px;background:#555"></div>
<div class="t" style="left:83px;top:1040px;font-size:12px;color:#bbb">pages/jizhang/jizhang</div>
<svg style="left:207px;top:1040px" width="13" height="13"><path d="M0.5 9.5V0.5H9.5M3.5 3.5H12.5V12.5H3.5Z" fill="none" stroke="#aaa"/></svg>
<svg style="left:410px;top:1038px" width="18" height="16"><path d="M4.5 9.5A4.5 5 0 0 0 13.5 9.5V7.5Q13.5 4 9 4Q4.5 4 4.5 7.5Z" fill="none" stroke="#aaa" stroke-width="1.1"/><path d="M6.5 4.5A2.5 2.5 0 0 1 11.5 4.5" fill="none" stroke="#aaa"/><path d="M9 5V14.3M4.5 8H2.5L1.5 6.5M13.5 8H15.5L16.5 6.5M4.7 11.5L2.8 12.5L1.8 14M13.3 11.5L15.2 12.5L16.2 14" fill="none" stroke="#aaa" stroke-width="1"/></svg>
<svg style="left:444px;top:1041px" width="17" height="11"><path d="M0.6 5C3 0.8 13 0.8 15.4 5C13 9.2 3 9.2 0.6 5Z" fill="none" stroke="#aaa" stroke-width="1.1"/><circle cx="8" cy="5" r="2.1" fill="none" stroke="#aaa" stroke-width="1.2"/></svg>
<div class="a" style="left:478px;top:1046px;width:2px;height:2px;background:#aaa"></div>
<div class="a" style="left:483px;top:1046px;width:2px;height:2px;background:#aaa"></div>
<div class="a" style="left:488px;top:1046px;width:2px;height:2px;background:#aaa"></div>
<!-- status bar -->
<svg style="left:516px;top:1039px" width="14" height="14"><circle cx="7" cy="7" r="6" fill="none" stroke="#aaa"/><path d="M4.5 4.5L9.5 9.5M9.5 4.5L4.5 9.5" stroke="#aaa"/></svg>
<div class="t" style="left:533px;top:1041px;font-size:12px;color:#bbb">0</div>
<svg style="left:545px;top:1039px" width="14" height="14"><path d="M7 1L13.5 12.5H0.5Z M7 5V9M7 10.5V11.5" fill="none" stroke="#aaa"/></svg>
<div class="t" style="left:561px;top:1041px;font-size:12px;color:#bbb">0</div>
<div class="t" style="left:1013px;top:1040px;font-size:12px;color:#bbb">行 1，列 1</div>
<div class="t" style="left:1085px;top:1040px;font-size:12px;color:#bbb">空格: 2</div>
<div class="t" style="left:1138px;top:1040px;font-size:12px;color:#bbb">UTF-8</div>
<div class="t" style="left:1186px;top:1040px;font-size:12px;color:#bbb">LF</div>
<div class="t" style="left:1211px;top:1040px;font-size:12px;color:#bbb">JSON</div>
<div class="t" style="left:1047px;top:1023px;font-size:26px;font-weight:bold;letter-spacing:1.8px;color:rgba(190,30,40,.4)">www.52xb.cn</div>

</body></html>
